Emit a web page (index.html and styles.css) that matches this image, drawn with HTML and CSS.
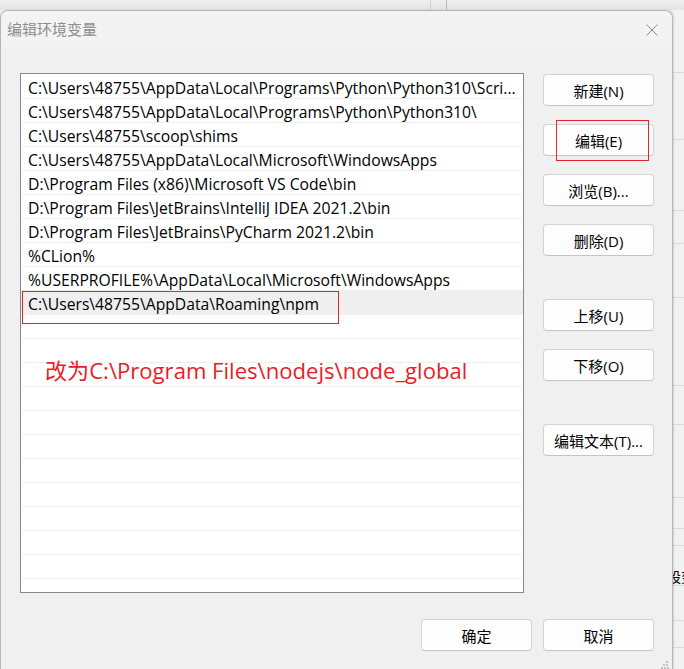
FILE: index.html
```html
<!DOCTYPE html>
<html lang="zh-CN">
<head>
<meta charset="utf-8">
<title>编辑环境变量</title>
<link rel="stylesheet" href="styles.css">
</head>
<body>
<div class="desk">
  <div class="top-strip"></div>
  <div class="stage">
    <div class="dialog">
      <div class="titlebar">
        <span class="title">编辑环境变量</span>
        <svg class="close" width="12" height="12" viewBox="0 0 12 12"><path d="M0.5 0.5 L11.5 11.5 M11.5 0.5 L0.5 11.5" stroke="#8a8a8a" stroke-width="1" fill="none"/></svg>
      </div>
      <div class="content">
        <div class="main-row">
          <div class="list">
            <div class="row">C:\Users\48755\AppData\Local\Programs\Python\Python310\Scri...</div>
            <div class="row">C:\Users\48755\AppData\Local\Programs\Python\Python310\</div>
            <div class="row">C:\Users\48755\scoop\shims</div>
            <div class="row">C:\Users\48755\AppData\Local\Microsoft\WindowsApps</div>
            <div class="row">D:\Program Files (x86)\Microsoft VS Code\bin</div>
            <div class="row">D:\Program Files\JetBrains\IntelliJ IDEA 2021.2\bin</div>
            <div class="row">D:\Program Files\JetBrains\PyCharm 2021.2\bin</div>
            <div class="row">%CLion%</div>
            <div class="row">%USERPROFILE%\AppData\Local\Microsoft\WindowsApps</div>
            <div class="row sel">C:\Users\48755\AppData\Roaming\npm</div>
            <div class="row"></div>
            <div class="row"></div>
            <div class="row"></div>
            <div class="row"></div>
            <div class="row"></div>
            <div class="row"></div>
            <div class="row"></div>
            <div class="row"></div>
            <div class="row"></div>
            <div class="row"></div>
            <div class="row"></div>
            <div class="row"></div>
          </div>
          <div class="side">
            <div class="btn">新建(N)</div>
            <div class="btn">编辑(E)</div>
            <div class="btn">浏览(B)...</div>
            <div class="btn">删除(D)</div>
            <div class="btn sep">上移(U)</div>
            <div class="btn">下移(O)</div>
            <div class="btn sep">编辑文本(T)...</div>
          </div>
        </div>
        <div class="footer">
          <div class="btn">确定</div>
          <div class="btn">取消</div>
        </div>
      </div>
      <div class="mark mark-row"></div>
      <div class="mark mark-btn"></div>
      <div class="note">改为C:\Program Files\nodejs\node_global</div>
      <svg class="grip" width="8" height="8" viewBox="0 0 8 8"><rect x="5" y="0" width="2" height="2" fill="#c4c4c4"/><rect x="2" y="3" width="2" height="2" fill="#c4c4c4"/><rect x="5" y="3" width="2" height="2" fill="#c4c4c4"/><rect x="0" y="6" width="2" height="2" fill="#c4c4c4"/><rect x="3" y="6" width="2" height="2" fill="#c4c4c4"/><rect x="6" y="6" width="2" height="2" fill="#c4c4c4"/></svg>
    </div>
    <div class="behind">
      <div class="behind-text">設变</div>
    </div>
  </div>
</div>
</body>
</html>
```

FILE: styles.css
```css
* { box-sizing: border-box; }
html, body { margin: 0; padding: 0; }
body {
  width: 684px;
  height: 669px;
  overflow: hidden;
  background: #ececec;
  font-family: "Open Sans", "Noto Sans CJK SC", sans-serif;
  color: #000;
}
.desk { display: flex; flex-direction: column; height: 669px; }
.top-strip {
  height: 10px;
  flex: none;
  background:
    linear-gradient(to right, transparent 430px, #d2d2d2 430px, #d2d2d2 431px, transparent 431px, transparent 446px, #b9b9b9 446px, #b9b9b9 447px, transparent 447px),
    linear-gradient(#efefef, #e3e3e3);
}
.stage { display: flex; flex: 1; min-height: 0; }
.dialog {
  width: 673px;
  flex: none;
  position: relative;
  background: #f0f0f0;
  border: 1px solid #b6b6b6;
  border-bottom: none;
  border-radius: 8px 8px 0 0;
  box-shadow: 1px 0 2px rgba(0,0,0,0.12);
  display: flex;
  flex-direction: column;
}
.titlebar {
  height: 38px;
  flex: none;
  background: #f3f3f3;
  border-radius: 7px 7px 0 0;
  display: flex;
  align-items: center;
  justify-content: space-between;
  padding: 0 14px 0 6px;
}
.title { font-family: "Noto Sans CJK SC", sans-serif; font-size: 15px; color: #8d8d8d; line-height: 20px; margin-bottom: 3px; }
.close { display: block; margin-bottom: 1px; }
.content { padding: 24px 18px 0 19px; }
.main-row { display: flex; gap: 19px; align-items: flex-start; }
.list {
  width: 504px;
  height: 520px;
  flex: none;
  border: 1px solid #828790;
  background: #fff;
  padding-top: 1px;
  overflow: hidden;
}
.row {
  height: 24px;
  border-bottom: 1px solid #efefef;
  padding: 2px 0 0 7px;
  font-size: 15.7px;
  line-height: 22px;
  white-space: nowrap;
  overflow: hidden;
}
.row.sel { background: #efefef; }
.side {
  width: 111px;
  flex: none;
  padding-top: 1px;
  display: flex;
  flex-direction: column;
  gap: 18px;
}
.btn {
  width: 111px;
  height: 32px;
  border: 1px solid #d3d3d3;
  border-bottom-color: #c4c4c4;
  border-radius: 4px;
  background: #fdfdfd;
  font-size: 15px;
  display: flex;
  align-items: center;
  justify-content: center;
  white-space: nowrap;
}
.btn.sep { margin-top: 25px; }
.footer { display: flex; justify-content: flex-end; gap: 11px; margin-top: 26px; }
.mark { position: absolute; border: 1px solid #e2242c; }
.mark-row { left: 21px; top: 280px; width: 317px; height: 33px; }
.mark-btn { left: 555px; top: 109px; width: 93px; height: 41px; }
.note {
  position: absolute;
  left: 44px;
  top: 346px;
  font-size: 22.1px;
  line-height: 26px;
  color: #ea1d27;
  white-space: nowrap;
}
.grip { position: absolute; right: 3px; bottom: 0; }
.behind {
  flex: 1;
  overflow: hidden;
  background:
    linear-gradient(#dadada, #dadada) 0 62px / 100% 1px no-repeat,
    linear-gradient(#dadada, #dadada) 0 129px / 100% 1px no-repeat,
    linear-gradient(#dadada, #dadada) 0 200px / 100% 1px no-repeat,
    linear-gradient(#dadada, #dadada) 0 233px / 100% 1px no-repeat,
    linear-gradient(#dadada, #dadada) 0 287px / 100% 1px no-repeat,
    linear-gradient(#dadada, #dadada) 0 375px / 100% 1px no-repeat,
    linear-gradient(#dadada, #dadada) 0 414px / 100% 1px no-repeat,
    linear-gradient(#dadada, #dadada) 0 487px / 100% 1px no-repeat,
    linear-gradient(#dadada, #dadada) 0 518px / 100% 1px no-repeat,
    linear-gradient(#dadada, #dadada) 0 535px / 100% 1px no-repeat,
    linear-gradient(#dadada, #dadada) 0 575px / 100% 1px no-repeat,
    linear-gradient(#dadada, #dadada) 0 610px / 100% 1px no-repeat,
    linear-gradient(#dadada, #dadada) 0 637px / 100% 1px no-repeat,
    #f2f2f2;
}
.behind-text {
  margin-top: 557px;
  margin-left: -6px;
  font-family: "Noto Sans CJK SC", sans-serif;
  font-size: 14px;
  line-height: 18px;
  white-space: nowrap;
}
```
